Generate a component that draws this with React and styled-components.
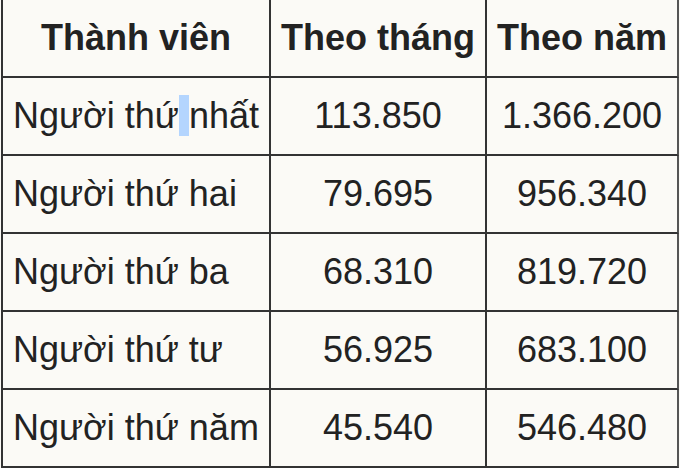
import styled, { createGlobalStyle } from 'styled-components';

const GlobalStyle = createGlobalStyle`
  html, body {
    margin: 0;
    padding: 0;
    background: #fbfaf6;
  }
  body {
    font-family: 'Liberation Sans', Arial, sans-serif;
    color: #222;
  }
`;

const Table = styled.table`
  border-collapse: separate;
  border-spacing: 0;
  table-layout: fixed;
  margin: -2px 0 0 1px;
  border-left: 2px solid #333;
  border-top: 2px solid #333;
  font-size: 36px;
`;

const Cell = styled.td`
  width: ${p => p.$width}px;
  height: 76px;
  padding: 0 10px;
  box-sizing: content-box;
  border-right: 2px solid ${p => (p.$last ? '#555' : '#333')};
  border-bottom: 2px solid #333;
  text-align: ${p => p.$align || 'center'};
  vertical-align: middle;
  white-space: nowrap;
  overflow: hidden;
`;

const Head = styled(Cell).attrs({ as: 'th' })`
  font-weight: bold;
  text-align: center;
`;

const Selected = styled.span`
  background: #b4d5fe;
`;

const widths = [246, 194, 168];

const rows = [
  ['Người thứ nhất', '113.850', '1.366.200'],
  ['Người thứ hai', '79.695', '956.340'],
  ['Người thứ ba', '68.310', '819.720'],
  ['Người thứ tư', '56.925', '683.100'],
  ['Người thứ năm', '45.540', '546.480'],
];

const renderName = name => {
  if (name !== 'Người thứ nhất') return name;
  return (
    <>
      Người thứ<Selected> </Selected>nhất
    </>
  );
};

export default function App() {
  return (
    <>
      <GlobalStyle />
      <Table>
        <thead>
          <tr>
            <Head $width={widths[0]}>Thành viên</Head>
            <Head $width={widths[1]}>Theo tháng</Head>
            <Head $width={widths[2]} $last>
              Theo năm
            </Head>
          </tr>
        </thead>
        <tbody>
          {rows.map(([name, month, year]) => (
            <tr key={name}>
              <Cell $width={widths[0]} $align="left">
                {renderName(name)}
              </Cell>
              <Cell $width={widths[1]}>{month}</Cell>
              <Cell $width={widths[2]} $last>
                {year}
              </Cell>
            </tr>
          ))}
        </tbody>
      </Table>
    </>
  );
}
